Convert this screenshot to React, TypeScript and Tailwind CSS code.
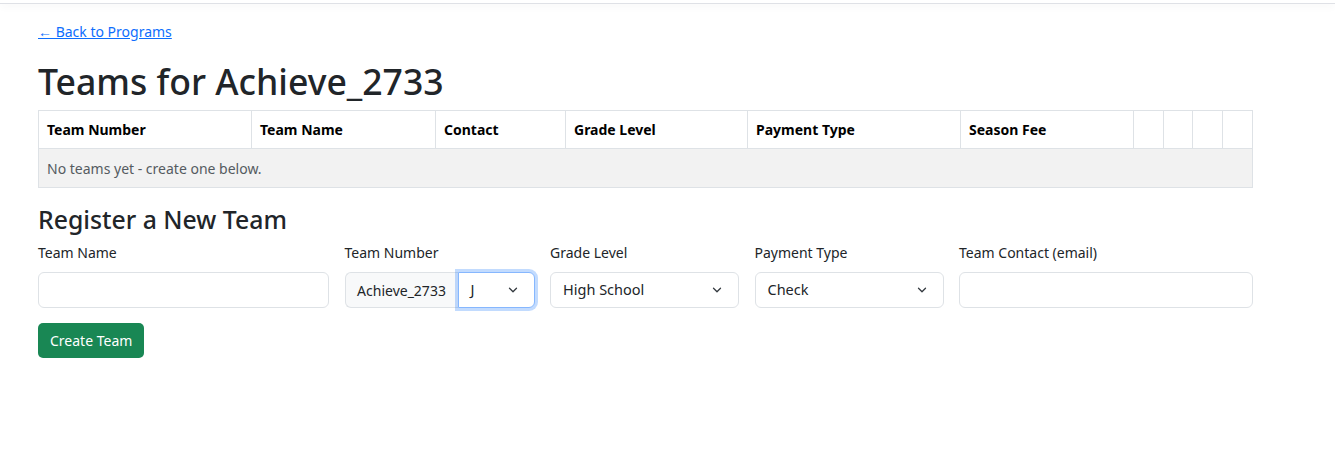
import { ChevronDown } from "lucide-react"

const columns = [
  { label: "Team Number", w: "w-[213px]" },
  { label: "Team Name", w: "w-[184px]" },
  { label: "Contact", w: "w-[130px]" },
  { label: "Grade Level", w: "w-[182px]" },
  { label: "Payment Type", w: "w-[213px]" },
  { label: "Season Fee", w: "w-[173px]" },
  { label: "", w: "w-[30px]" },
  { label: "", w: "w-[29px]" },
  { label: "", w: "w-[30px]" },
  { label: "", w: "" },
]

function Label({ children }: { children: React.ReactNode }) {
  return <label className="block text-[14px] text-[#212529] mb-[9px] leading-[20px]">{children}</label>
}

function Select({ value, focused = false }: { value: string; focused?: boolean }) {
  return (
    <div
      className={
        focused
          ? "h-[36px] flex items-center justify-between pl-[12px] pr-[14px] bg-white border border-[#86b7fe] rounded-r-[6px] shadow-[0_0_0_3px_rgba(13,110,253,0.25)] text-[14.5px] text-[#212529]"
          : "h-[36px] flex items-center justify-between pl-[12px] pr-[14px] bg-white border border-[#dee2e6] rounded-[6px] text-[14.5px] text-[#212529]"
      }
    >
      <span>{value}</span>
      <ChevronDown className="w-[14px] h-[14px] text-[#343a40]" strokeWidth={2.2} />
    </div>
  )
}

export default function App() {
  return (
    <div className="min-h-[457px] bg-white" style={{ fontFamily: '"Noto Sans", "Open Sans", sans-serif' }}>
      {/* Top bar edge */}
      <div className="h-[4px] border-b border-[#dfe1e6] shadow-[0_2px_8px_rgba(0,0,0,0.05)]" />

      <div className="pl-[38px] w-[1253px]">
        <div className="pt-[15px]">
          <a href="#" className="text-[14px] text-[#0d6efd] underline leading-[20px]">
            ← Back to Programs
          </a>
        </div>

        <h1 className="mt-[14px] text-[35.6px] font-medium text-[#212529] leading-[48px] mb-[5px]">
          Teams for Achieve_2733
        </h1>

        {/* Teams table */}
        <table className="w-full border-collapse text-[14px]">
          <thead>
            <tr>
              {columns.map((c, i) => (
                <th
                  key={i}
                  className={`${c.w} h-[38px] border border-[#dee2e6] px-[8px] text-left font-bold text-black`}
                >
                  {c.label}
                </th>
              ))}
            </tr>
          </thead>
          <tbody>
            <tr>
              <td colSpan={10} className="h-[39px] border border-[#dee2e6] bg-[#f2f2f2] px-[8px] text-[#555b61]">
                No teams yet - create one below.
              </td>
            </tr>
          </tbody>
        </table>

        <h3 className="mt-[15px] mb-[8px] text-[24.8px] font-medium text-[#212529] leading-[32px]">
          Register a New Team
        </h3>

        {/* New team form */}
        <div className="grid grid-cols-[291px_190px_189px_189px_1fr] gap-x-[15.5px]">
          <div>
            <Label>Team Name</Label>
            <div className="h-[36px] border border-[#dee2e6] rounded-[6px] bg-white" />
          </div>
          <div>
            <Label>Team Number</Label>
            <div className="flex">
              <div className="h-[36px] w-[113px] flex items-center justify-center bg-[#f8f9fa] border border-r-0 border-[#dee2e6] rounded-l-[6px] text-[14px] text-[#212529]">
                Achieve_2733
              </div>
              <div className="flex-1">
                <Select value="J" focused />
              </div>
            </div>
          </div>
          <div>
            <Label>Grade Level</Label>
            <Select value="High School" />
          </div>
          <div>
            <Label>Payment Type</Label>
            <Select value="Check" />
          </div>
          <div>
            <Label>Team Contact (email)</Label>
            <div className="h-[36px] border border-[#dee2e6] rounded-[6px] bg-white" />
          </div>
        </div>

        <button className="mt-[15px] h-[35px] px-[12px] bg-[#198754] text-white text-[14px] rounded-[5px]">
          Create Team
        </button>
      </div>
    </div>
  )
}
